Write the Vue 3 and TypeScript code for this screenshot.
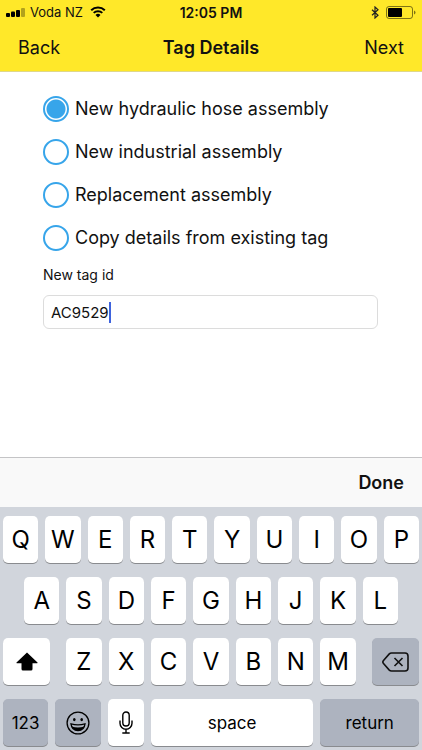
<script setup lang="ts">
import { ref } from 'vue'

interface Option {
  value: string
  label: string
}

const options: Option[] = [
  { value: 'hydraulic', label: 'New hydraulic hose assembly' },
  { value: 'industrial', label: 'New industrial assembly' },
  { value: 'replacement', label: 'Replacement assembly' },
  { value: 'copy', label: 'Copy details from existing tag' },
]

const selected = ref<string>('hydraulic')
const tagId = ref<string>('AC9529')

const topRow: string[] = [...'QWERTYUIOP']
const homeRow: string[] = [...'ASDFGHJKL']
const bottomRow: string[] = [...'ZXCVBNM']

function press(letter: string): void {
  tagId.value += letter
}

function erase(): void {
  tagId.value = tagId.value.slice(0, -1)
}
</script>

<template>
  <div class="screen">
    <header class="header">
      <div class="status">
        <div class="carrier">
          <svg class="signal" viewBox="0 0 19 9" aria-hidden="true">
            <rect x="0" y="5" width="4" height="4" rx="1" />
            <rect x="5" y="3.500" width="4" height="5.500" rx="1" />
            <rect x="10" y="2" width="4" height="7" rx="1" />
            <rect x="15" y="0" width="4" height="9" rx="1" opacity="0.3" />
          </svg>
          <span>Voda NZ</span>
          <svg class="wifi" viewBox="0 0 16 12" aria-hidden="true">
            <path d="M1.200 4.300a9.800 9.800 0 0 1 13.600 0" />
            <path d="M3.700 6.900a6.200 6.200 0 0 1 8.600 0" />
            <path class="dot" d="M8 11.600 5.500 9a3.700 3.700 0 0 1 5 0Z" />
          </svg>
        </div>
        <time class="clock">12:05 PM</time>
        <div class="power">
          <svg class="bluetooth" viewBox="0 0 8 13" aria-hidden="true">
            <path d="M1 3.700 7 9.200 4 12V1l3 2.800L1 9.300" />
          </svg>
          <svg class="battery" viewBox="0 0 30 13" aria-hidden="true">
            <rect class="shell" x="0.500" y="0.500" width="26" height="12" rx="2.500" />
            <rect x="2" y="2" width="14" height="9" rx="1" />
            <path d="M28 4.500q1.500.5 1.500 2t-1.500 2Z" opacity="0.5" />
          </svg>
        </div>
      </div>
      <nav class="nav">
        <button type="button" class="nav-button">Back</button>
        <h1 class="title">Tag Details</h1>
        <button type="button" class="nav-button next">Next</button>
      </nav>
    </header>

    <main class="form">
      <div class="options" role="radiogroup" aria-label="Tag type">
        <label v-for="option in options" :key="option.value" class="option">
          <input v-model="selected" class="radio" type="radio" name="tag-type" :value="option.value" />
          <span>{{ option.label }}</span>
        </label>
      </div>
      <label class="field-label" for="tag-id">New tag id</label>
      <div class="field">
        <input id="tag-id" v-model="tagId" class="field-input" type="text" autocomplete="off" />
        <span class="caret" aria-hidden="true"></span>
      </div>
    </main>

    <div class="accessory">
      <button type="button" class="done">Done</button>
    </div>

    <section class="keyboard" aria-label="Keyboard">
      <div class="row">
        <button v-for="k in topRow" :key="k" type="button" class="key" @click="press(k)">{{ k }}</button>
      </div>
      <div class="row inset">
        <button v-for="k in homeRow" :key="k" type="button" class="key" @click="press(k)">{{ k }}</button>
      </div>
      <div class="row-shift">
        <button type="button" class="key" aria-label="Shift">
          <svg class="shift" viewBox="0 0 22 19" aria-hidden="true">
            <path d="M11 .5 21.500 10.500q.5.700-.4.700H16.500v5.800q0 1.500-1.500 1.500H7q-1.500 0-1.500-1.500v-5.800H.9q-.9 0-.4-.7Z" />
          </svg>
        </button>
        <div class="row">
          <button v-for="k in bottomRow" :key="k" type="button" class="key" @click="press(k)">{{ k }}</button>
        </div>
        <button type="button" class="key dark" aria-label="Delete" @click="erase">
          <svg class="delete" viewBox="0 0 27 20" aria-hidden="true">
            <path d="M9.500 1H23q3 0 3 3v12q0 3-3 3H9.500q-1.300 0-2.200-.9L1.500 11.500q-1.300-1.500 0-3L7.300 1.900Q8.200 1 9.500 1Z" />
            <path d="m12.500 6 8 8m0-8-8 8" />
          </svg>
        </button>
      </div>
      <div class="row-space">
        <button type="button" class="key dark word">123</button>
        <button type="button" class="key dark" aria-label="Emoji">
          <svg class="emoji" viewBox="0 0 24 24" aria-hidden="true">
            <circle class="line" cx="12" cy="12" r="10.900" />
            <ellipse cx="8.300" cy="8.600" rx="1.300" ry="1.700" />
            <ellipse cx="15.700" cy="8.600" rx="1.300" ry="1.700" />
            <path class="line" d="M5 12.800q7 2.200 14 0-.8 6.700-7 6.700t-7-6.700Z" />
            <path d="M5.800 15.500q6.200 2 12.400 0-1.500 4-6.200 4t-6.200-4Z" />
          </svg>
        </button>
        <button type="button" class="key" aria-label="Dictation">
          <svg class="mic" viewBox="0 0 14 23" aria-hidden="true">
            <rect x="3.800" y="1" width="6.400" height="14" rx="3.200" />
            <path d="M1 9.500v2.700a6 6 0 0 0 12 0V9.500M7 18.200V22M3.300 22h7.400" />
          </svg>
        </button>
        <button type="button" class="key word" @click="press(' ')">space</button>
        <button type="button" class="key dark word">return</button>
      </div>
    </section>
  </div>
</template>

<style>
body {
  margin: 0;
  background: #fff;
}
</style>

<style scoped>
.screen {
  display: flex;
  flex-direction: column;
  min-height: 100vh;
  font-family: Inter, "Liberation Sans", sans-serif;
  color: #111;
}

button {
  margin: 0;
  padding: 0;
  border: 0;
  background: none;
  font: inherit;
  color: inherit;
  cursor: pointer;
}

.header {
  background: #ffe829;
  border-bottom: 1px solid #dfd88a;
}

.status {
  display: grid;
  grid-template-columns: 1fr auto 1fr;
  align-items: center;
  height: 24px;
  padding: 0 6px;
  font-size: 13px;
}

.carrier,
.power {
  display: flex;
  align-items: center;
  gap: 5px;
}

.power {
  justify-content: flex-end;
  gap: 7px;
}

.clock {
  font-size: 14px;
  font-weight: 600;
}

.signal {
  width: 19px;
  height: 9px;
}

.wifi {
  width: 16px;
  height: 12px;
  margin-left: 2px;
  fill: none;
  stroke: #000;
  stroke-width: 2;
}

.wifi .dot {
  fill: #000;
  stroke: none;
}

.bluetooth {
  width: 8px;
  height: 13px;
  fill: none;
  stroke: #222;
  stroke-width: 1.2;
}

.battery {
  width: 30px;
  height: 13px;
}

.battery .shell {
  fill: none;
  stroke: #000;
  stroke-opacity: 0.5;
}

.nav {
  display: grid;
  grid-template-columns: 1fr auto 1fr;
  align-items: center;
  height: 47px;
  padding: 0 18px;
  font-size: 18px;
}

.nav-button {
  justify-self: start;
}

.next {
  justify-self: end;
}

.title {
  margin: 0;
  font-size: 18px;
  font-weight: 600;
}

.form {
  flex: 1;
  padding: 15px 44px 24px 43px;
}

.option {
  display: flex;
  align-items: center;
  gap: 6px;
  height: 43px;
  font-size: 18px;
  white-space: nowrap;
}

.radio {
  appearance: none;
  flex: none;
  width: 26px;
  height: 26px;
  margin: 0;
  border: 2px solid #37a5ea;
  border-radius: 50%;
  background: #fff;
}

.radio:checked {
  background: radial-gradient(circle, #37a5ea 9px, #fff 10px);
}

.field-label {
  display: block;
  padding-top: 6px;
  font-size: 14px;
  line-height: 20px;
}

.field {
  display: flex;
  align-items: center;
  height: 32px;
  margin-top: 10px;
  padding: 0 7px;
  border: 1px solid #dcdcdc;
  border-radius: 6px;
}

.field-input {
  field-sizing: content;
  margin: 0;
  padding: 0;
  border: 0;
  outline: 0;
  background: none;
  font: inherit;
  font-size: 15px;
  color: inherit;
  caret-color: transparent;
}

.caret {
  width: 2px;
  height: 21px;
  background: #3e63dd;
}

.accessory {
  display: flex;
  align-items: center;
  justify-content: flex-end;
  height: 49px;
  padding: 0 18px;
  border-top: 1px solid #c4c4c6;
  background: #f9f9f9;
}

.done {
  font-size: 18px;
  font-weight: 600;
}

.keyboard {
  display: grid;
  gap: 14px;
  padding: 9px 3px 4px;
  background: #d1d5dc;
  color: #000;
}

.row,
.row-shift,
.row-space {
  display: grid;
  grid-auto-flow: column;
  grid-auto-columns: minmax(0, 1fr);
  gap: 7px;
}

.inset {
  padding: 0 21px;
}

.row-shift {
  grid-template-columns: 47fr 289fr 47fr;
  gap: 16px;
}

.row-space {
  grid-template-columns: 45fr 46fr 35fr 162fr 98fr;
}

.key {
  display: flex;
  align-items: center;
  justify-content: center;
  height: 47px;
  border-radius: 5px;
  background: #fff;
  box-shadow: 0 1px 0 #898b8f;
  font-size: 24px;
}

.dark {
  background: #adb3bf;
}

.word {
  font-size: 17px;
}

.shift {
  width: 22px;
  height: 19px;
}

.delete {
  width: 27px;
  height: 20px;
  fill: none;
  stroke: #111;
  stroke-width: 1.6;
}

.emoji {
  width: 24px;
  height: 24px;
}

.emoji .line {
  fill: none;
  stroke: #000;
  stroke-width: 1.3;
}

.mic {
  width: 14px;
  height: 23px;
  fill: none;
  stroke: #000;
  stroke-width: 1.4;
}
</style>
